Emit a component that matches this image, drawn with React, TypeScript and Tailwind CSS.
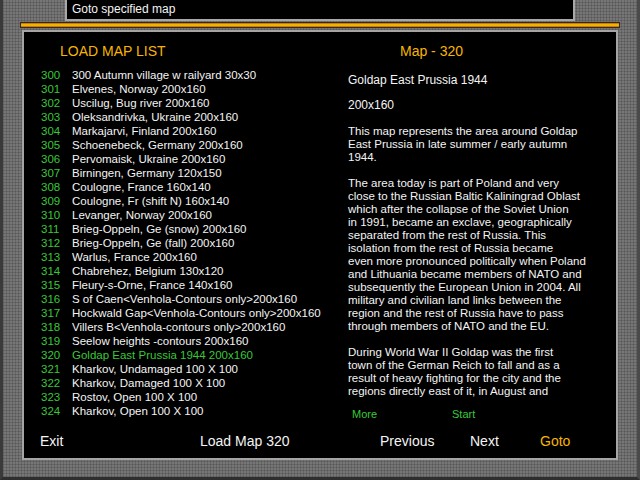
import React from 'react';

const maps: [string, string][] = [
  ['300', '300 Autumn village w railyard 30x30'],
  ['301', 'Elvenes, Norway 200x160'],
  ['302', 'Uscilug, Bug river 200x160'],
  ['303', 'Oleksandrivka, Ukraine 200x160'],
  ['304', 'Markajarvi, Finland 200x160'],
  ['305', 'Schoenebeck, Germany 200x160'],
  ['306', 'Pervomaisk, Ukraine 200x160'],
  ['307', 'Birningen, Germany 120x150'],
  ['308', 'Coulogne, France 160x140'],
  ['309', 'Coulogne, Fr (shift N) 160x140'],
  ['310', 'Levanger, Norway 200x160'],
  ['311', 'Brieg-Oppeln, Ge (snow) 200x160'],
  ['312', 'Brieg-Oppeln, Ge (fall) 200x160'],
  ['313', 'Warlus, France 200x160'],
  ['314', 'Chabrehez, Belgium 130x120'],
  ['315', 'Fleury-s-Orne, France 140x160'],
  ['316', 'S of Caen<Venhola-Contours only>200x160'],
  ['317', 'Hockwald Gap<Venhola-Contours only>200x160'],
  ['318', 'Villers B<Venhola-contours only>200x160'],
  ['319', 'Seelow heights -contours 200x160'],
  ['320', 'Goldap East Prussia 1944 200x160'],
  ['321', 'Kharkov, Undamaged 100 X 100'],
  ['322', 'Kharkov, Damaged 100 X 100'],
  ['323', 'Rostov, Open 100 X 100'],
  ['324', 'Kharkov, Open 100 X 100'],
];

const paragraphs: string[][] = [
  [
    'This map represents the area around Goldap',
    'East Prussia in late summer / early autumn',
    '1944.',
  ],
  [
    'The area today is part of Poland and very',
    'close to the Russian Baltic Kaliningrad Oblast',
    'which after the collapse of the Soviet Union',
    'in 1991, became an exclave, geographically',
    'separated from the rest of Russia. This',
    'isolation from the rest of Russia became',
    'even more pronounced politically when Poland',
    'and Lithuania became members of NATO and',
    'subsequently the European Union in 2004. All',
    'military and civilian land links between the',
    'region and the rest of Russia have to pass',
    'through members of NATO and the EU.',
  ],
  [
    'During World War II Goldap was the first',
    'town of the German Reich to fall and as a',
    'result of heavy fighting for the city and the',
    'regions directly east of it, in August and',
  ],
];

const App: React.FC = () => {
  return (
    <div
      className="w-[640px] h-[480px] overflow-hidden bg-[#767676] bg-[image:repeating-linear-gradient(0deg,rgba(0,0,0,0.14)_0_1px,transparent_1px_3px),repeating-linear-gradient(90deg,rgba(0,0,0,0.14)_0_1px,transparent_1px_3px)] border-l-[3px] border-l-[#3a3a3a] border-r-[3px] border-r-[#4a4a4a] border-b-[3px] border-b-[#2e2e2e] font-['Liberation_Sans',sans-serif] text-[#f4f4f4]"
    >
      {/* Title bar */}
      <div className="ml-[62px] w-[510px] h-[21px] bg-black border-x-2 border-b-2 border-[#a8a8a8] pl-[5px] text-[12px] leading-[19px]">
        Goto specified map
      </div>

      {/* Orange separator */}
      <div className="ml-[17px] mt-[1px] w-[600px] h-[6px] border border-[#2a2a2a] bg-[linear-gradient(#c85a00,#ffd000,#c85a00)]" />

      {/* Main panel */}
      <div className="ml-[19px] mt-[2px] w-[596px] h-[430px] bg-black border-2 border-[#a4a4a4] flex flex-col">
        <div className="h-[401px] flex">
          {/* Map list */}
          <div className="w-[324px] flex flex-col pt-[11px]">
            <div className="ml-[36px] h-[16px] leading-[16px] text-[14px] text-[#f8b400]">LOAD MAP LIST</div>
            <div className="mt-[9px] flex flex-col">
              {maps.map(([num, name]) => (
                <div key={num} className="h-[14px] leading-[14px] text-[11.5px] flex whitespace-nowrap">
                  <span className="ml-[17px] w-[31px] text-[#38c838]">{num}</span>
                  <span className={num === '320' ? 'text-[#38c838]' : ''}>{name}</span>
                </div>
              ))}
            </div>
          </div>

          {/* Map details */}
          <div className="flex-1 flex flex-col pt-[11px]">
            <div className="ml-[52px] h-[16px] leading-[16px] text-[14px] text-[#f8b400]">Map - 320</div>
            <div className="mt-[14px] h-[14px] leading-[14px] text-[12px]">Goldap East Prussia 1944</div>
            <div className="mt-[11px] h-[14px] leading-[14px] text-[12px]">200x160</div>
            <div className="mt-[13px] flex flex-col gap-[13px] text-[11.5px]">
              {paragraphs.map((lines, i) => (
                <div key={i} className="flex flex-col">
                  {lines.map((line) => (
                    <div key={line} className="h-[13px] leading-[13px] whitespace-nowrap">
                      {line}
                    </div>
                  ))}
                </div>
              ))}
            </div>
            <div className="mt-[10px] flex text-[11px] leading-[12px] text-[#38c838]">
              <span className="ml-[4px] w-[100px]">More</span>
              <span>Start</span>
            </div>
          </div>
        </div>

        {/* Bottom actions */}
        <div className="h-[16px] leading-[16px] text-[14px] flex whitespace-nowrap">
          <span className="ml-[16px] w-[160px]">Exit</span>
          <span className="w-[180px]">Load Map 320</span>
          <span className="w-[90px]">Previous</span>
          <span className="w-[70px]">Next</span>
          <span className="text-[#f8b400]">Goto</span>
        </div>
      </div>
    </div>
  );
};

export default App;
